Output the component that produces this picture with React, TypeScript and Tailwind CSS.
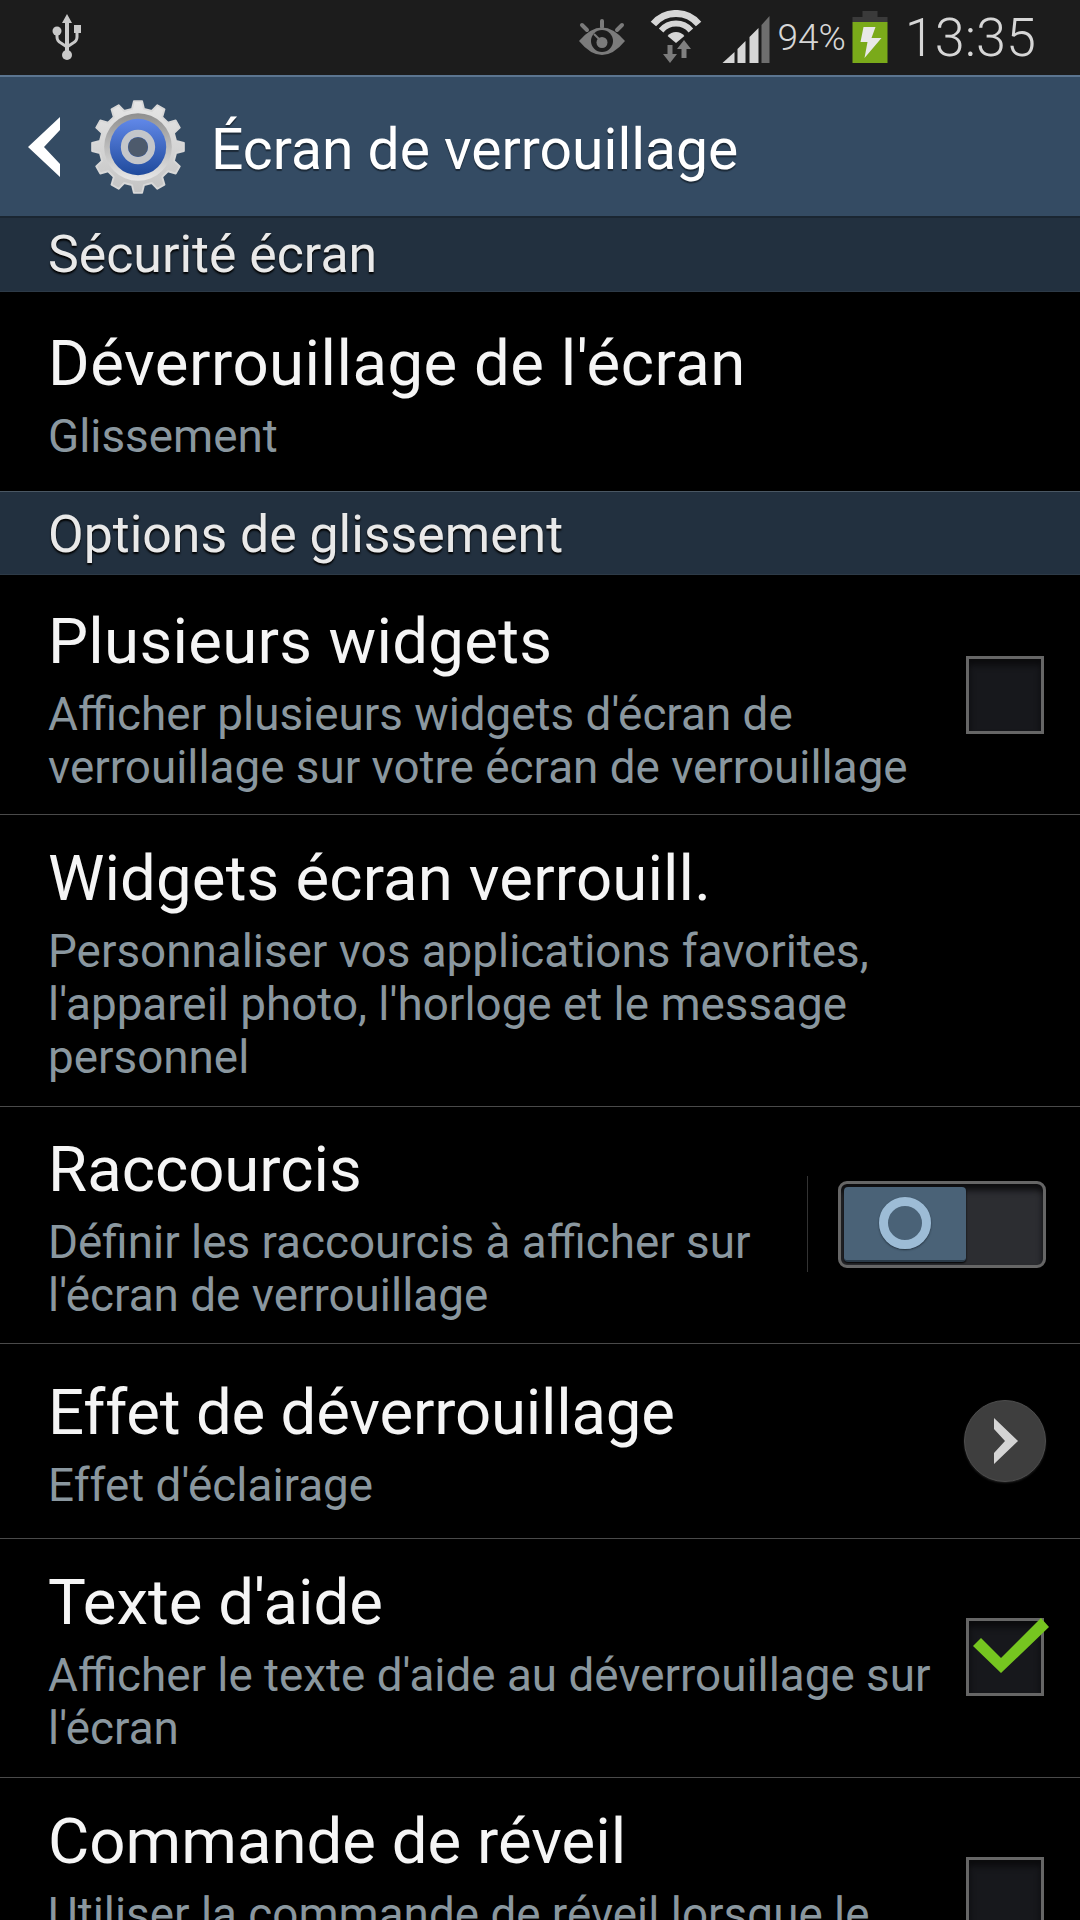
import { ReactNode } from "react";

// 12-tooth gear outline around (50,50)
function gearPath(teeth: number, outer: number, inner: number) {
  const pts: string[] = [];
  for (let i = 0; i < teeth; i++) {
    const a = (i / teeth) * Math.PI * 2 - Math.PI / 2;
    const step = (Math.PI * 2) / teeth;
    const list: [number, number][] = [
      [a - step * 0.3, inner],
      [a - step * 0.17, outer],
      [a + step * 0.17, outer],
      [a + step * 0.3, inner],
    ];
    list.forEach(([ang, r]) => {
      pts.push(`${(50 + Math.cos(ang) * r).toFixed(2)} ${(50 + Math.sin(ang) * r).toFixed(2)}`);
    });
  }
  return `M${pts.join("L")}Z`;
}

function SettingsGear() {
  return (
    <svg width="94" height="94" viewBox="0 0 100 100" className="shrink-0">
      <defs>
        <linearGradient id="gearBody" x1="0" y1="0" x2="0" y2="1">
          <stop offset="0" stopColor="#e6e6e6" />
          <stop offset="1" stopColor="#c4c4c4" />
        </linearGradient>
        <linearGradient id="gearBlue" x1="0" y1="0" x2="0" y2="1">
          <stop offset="0" stopColor="#6188e8" />
          <stop offset="1" stopColor="#1f4a9c" />
        </linearGradient>
        <linearGradient id="gearRing" x1="0" y1="0" x2="0" y2="1">
          <stop offset="0" stopColor="#8f8f8f" />
          <stop offset="1" stopColor="#e8e8e8" />
        </linearGradient>
      </defs>
      <path d={gearPath(12, 49, 41)} fill="url(#gearBody)" stroke="#d8d8d8" strokeWidth="2" strokeLinejoin="round" />
      <circle cx="50" cy="50" r="36" fill="url(#gearRing)" />
      <circle cx="50" cy="50" r="30" fill="url(#gearBlue)" />
      <circle cx="50" cy="50" r="14.5" fill="none" stroke="#c4c6ca" strokeWidth="7.5" />
      <circle cx="50" cy="50" r="10.5" fill="#4d5a6c" />
    </svg>
  );
}

function UsbIcon() {
  return (
    <svg width="30" height="48" viewBox="0 0 30 48" className="shrink-0">
      <g fill="#c9c9c9">
        <path d="M15 0 L20 9 L17 9 L17 38 L13 38 L13 9 L10 9 Z" />
        <circle cx="15" cy="41" r="5" />
        <circle cx="5" cy="17" r="4.5" />
        <rect x="22" y="11" width="7" height="8" />
      </g>
      <path d="M5 18 V23 Q5 27 9 29 L15 33 L21 29 Q25 27 25 23 V18" fill="none" stroke="#c9c9c9" strokeWidth="3" />
    </svg>
  );
}

function EyeIcon() {
  return (
    <svg width="46" height="37" viewBox="0 0 46 37" className="shrink-0">
      <g fill="none" stroke="#7b7b7b" strokeWidth="4" strokeLinecap="round">
        <path d="M23 2 V8" />
        <path d="M3 6 L8 11" />
        <path d="M43 6 L38 11" />
      </g>
      <path d="M0 22 Q23 -5 46 22 Q23 50 0 22 Z" fill="#7b7b7b" />
      <circle cx="23" cy="22" r="11" fill="#1c1c1c" />
      <circle cx="23" cy="23.5" r="5.5" fill="#7b7b7b" />
      <path d="M15 15 L23 23" stroke="#7b7b7b" strokeWidth="2" />
    </svg>
  );
}

function WifiIcon() {
  return (
    <svg width="52" height="53" viewBox="0 0 52 53" className="shrink-0">
      <g fill="none" stroke="#d6d6d6">
        <path d="M3.4 14 A29.5 29.5 0 0 1 48.6 14" strokeWidth="7" />
        <path d="M11.1 20.5 A19.5 19.5 0 0 1 40.9 20.5" strokeWidth="6" />
      </g>
      <path d="M26 33 L17.6 26 A11 11 0 0 1 34.4 26 Z" fill="#d6d6d6" />
      <path d="M20 53 L13 44 L17.5 44 L17.5 35 L22.5 35 L22.5 44 L27 44 Z" fill="#7b7b7b" />
      <path d="M34 30 L41 39 L36.5 39 L36.5 48 L31.5 48 L31.5 39 L27 39 Z" fill="#808080" />
    </svg>
  );
}

function SignalIcon() {
  return (
    <svg width="48" height="47" viewBox="0 0 47 47" className="shrink-0">
      <path d="M0 47 L12 36 V47 Z" fill="#d6d6d6" />
      <path d="M15 33 L23 25 V47 H15 Z" fill="#d6d6d6" />
      <path d="M27 21 L36 12 V47 H27 Z" fill="#d6d6d6" />
      <path d="M39 9 L47 0 V47 H39 Z" fill="#6e6e6e" />
    </svg>
  );
}

function BatteryIcon() {
  return (
    <svg width="36" height="52" viewBox="0 0 35 52" className="shrink-0">
      <rect x="10" y="0" width="15" height="6" fill="#3a3a3a" />
      <rect x="0" y="6" width="35" height="5" fill="#3a3a3a" />
      <rect x="0" y="11" width="35" height="41" fill="#7aaa1a" />
      <path d="M11 16 H23 L19 27 H29 L12 47 L15 31 H8 Z" fill="#e8e8e8" />
    </svg>
  );
}

function SectionHeader({ label, className }: { label: string; className: string }) {
  return (
    <div
      className={`flex items-center pl-[48px] bg-[#22303f] border-b border-[#2d3a47] text-[#e9e9e9] text-[51.8px] leading-none [text-shadow:0_2px_2px_#000] ${className}`}
    >
      {label}
    </div>
  );
}

function Row({
  title,
  lines,
  height,
  top = "pt-[29px]",
  tracking = "",
  right,
  last,
}: {
  title: string;
  lines: string[];
  height: string;
  top?: string;
  tracking?: string;
  right?: ReactNode;
  last?: boolean;
}) {
  return (
    <div className={`flex items-start justify-between shrink-0 ${height} ${last ? "" : "border-b border-[#4a4a4a]"}`}>
      <div className={`pl-[48px] ${top}`}>
        <div className={`text-[63.5px] leading-[70px] text-[#f5f5f5] whitespace-nowrap ${tracking}`}>{title}</div>
        <div className="mt-[11px] text-[45.8px] leading-[53px] text-[#8a979f] whitespace-nowrap">
          {lines.map((l) => (
            <div key={l}>{l}</div>
          ))}
        </div>
      </div>
      {right}
    </div>
  );
}

function Checkbox({ checked }: { checked?: boolean }) {
  return (
    <div className="relative w-[78px] h-[78px] shrink-0 bg-[#17181c] border-[3px] border-[#666666] shadow-[inset_0_6px_6px_#0b0b0d]">
      {checked && (
        <svg width="76" height="58" viewBox="0 0 76 58" className="absolute left-[4px] top-[-3px]">
          <path d="M0 28 L8 20 L28 40 L68 0 L76 9 L28 55 Z" fill="#76c520" />
        </svg>
      )}
    </div>
  );
}

function Toggle() {
  return (
    <div className="flex items-center self-center -mt-[2px] gap-[30px] pr-[34px]">
      <div className="w-px h-[96px] bg-[#333333]" />
      <div className="flex w-[208px] h-[87px] p-[3px] rounded-[9px] bg-[#2c2d31] border-[3px] border-[#666666] shadow-[inset_0_6px_6px_#0c0c0e]">
        <div className="flex items-center justify-center w-[122px] h-[75px] rounded-[4px] bg-[#4a6277] border-b-2 border-[#2a3a48] shadow-[0_1px_2px_#000]">
          <div className="w-[52px] h-[52px] rounded-full border-[9px] border-[#9dbcd6] shadow-[0_1px_2px_#22303d]" />
        </div>
      </div>
    </div>
  );
}

function ArrowButton() {
  return (
    <div className="flex items-center justify-center self-center w-[82px] h-[82px] mr-[34px] rounded-full bg-[#3e3e3e] border border-[#4d4d4d] shadow-[0_1px_2px_#222]">
      <svg width="24" height="46" viewBox="0 0 24 46" className="ml-[2px]">
        <path d="M0 0 L24 23 L0 46 V35 L11 23 L0 11 Z" fill="#d4d4d4" />
      </svg>
    </div>
  );
}

export default function App() {
  return (
    <div className="flex flex-col w-[1080px] h-[1920px] overflow-hidden bg-black font-['Roboto',sans-serif]">
      {/* status bar */}
      <div className="flex items-center h-[75px] shrink-0 pl-[52px] pr-[44px] bg-[#1c1c1c] text-[#d6d6d6]">
        <UsbIcon />
        <div className="flex-1" />
        <EyeIcon />
        <div className="ml-[25px] -mt-[2px]">
          <WifiIcon />
        </div>
        <div className="ml-[20px] mt-[4px]">
          <SignalIcon />
        </div>
        <span className="ml-[7px] text-[37px] leading-none font-light">94%</span>
        <div className="ml-[6px] -mt-[1px]">
          <BatteryIcon />
        </div>
        <span className="ml-[17px] text-[54px] leading-none font-light">13:35</span>
      </div>

      {/* action bar */}
      <div className="flex items-center h-[143px] shrink-0 pl-[28px] bg-[#344b63] border-t-2 border-[#5b7590] border-b-2 border-b-[#1a2632]">
        <svg width="32" height="60" viewBox="0 0 32 60" className="shrink-0">
          <path d="M32 0 V13 L16 30 L32 47 V60 L0 30 Z" fill="#ffffff" />
        </svg>
        <div className="ml-[31px]">
          <SettingsGear />
        </div>
        <div className="ml-[26px] mt-[5px] text-[57px] leading-none text-white [text-shadow:0_2px_1px_#1c2a38]">
          Écran de verrouillage
        </div>
      </div>

      <SectionHeader label="Sécurité écran" className="h-[74px] shrink-0" />
      <Row
        title="Déverrouillage de l'écran"
        lines={["Glissement"]}
        height="h-[199px]"
        top="pt-[37px]"
        tracking="tracking-[0.5px]"
        last
      />
      <SectionHeader label="Options de glissement" className="h-[84px] pt-[4px] shrink-0 border-t border-t-[#4a5763]" />
      <Row
        title="Plusieurs widgets"
        lines={["Afficher plusieurs widgets d'écran de", "verrouillage sur votre écran de verrouillage"]}
        height="h-[240px]"
        top="pt-[32px]"
        tracking="tracking-[0.3px]"
        right={
          <div className="self-center pr-[36px]">
            <Checkbox />
          </div>
        }
      />
      <Row
        title="Widgets écran verrouill."
        lines={["Personnaliser vos applications favorites,", "l'appareil photo, l'horloge et le message", "personnel"]}
        height="h-[292px]"
        tracking="tracking-[0.15px]"
      />
      <Row
        title="Raccourcis"
        lines={["Définir les raccourcis à afficher sur", "l'écran de verrouillage"]}
        height="h-[237px]"
        top="pt-[28px]"
        right={<Toggle />}
      />
      <Row
        title="Effet de déverrouillage"
        lines={["Effet d'éclairage"]}
        height="h-[195px]"
        top="pt-[34px]"
        tracking="tracking-[-0.2px]"
        right={<ArrowButton />}
      />
      <Row
        title="Texte d'aide"
        lines={["Afficher le texte d'aide au déverrouillage sur", "l'écran"]}
        height="h-[239px]"
        right={
          <div className="self-center -mt-[2px] pr-[36px]">
            <Checkbox checked />
          </div>
        }
      />
      <Row
        title="Commande de réveil"
        lines={["Utiliser la commande de réveil lorsque le"]}
        height="h-[240px]"
        last
        right={
          <div className="self-center -mt-[4px] pr-[36px]">
            <Checkbox />
          </div>
        }
      />
    </div>
  );
}
